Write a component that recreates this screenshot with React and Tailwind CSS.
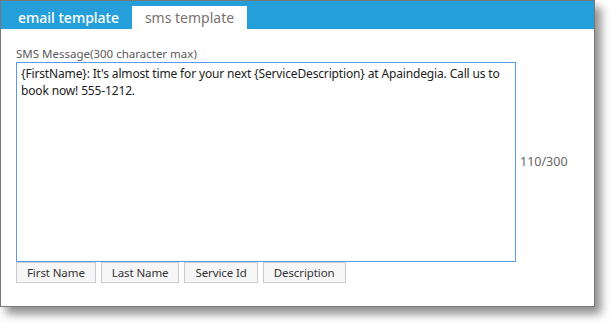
import React from 'react';

export default function App() {
  const message =
    "{FirstName}: It's almost time for your next {ServiceDescription} at Apaindegia. Call us to book now! 555-1212.";
  const tags = ['First Name', 'Last Name', 'Service Id', 'Description'];

  return (
    <div className="w-[611px] h-[323px] bg-white font-['Noto_Sans',sans-serif]">
      <div className="w-[595px] h-[307px] border border-[#787878] bg-white shadow-[6px_7px_9px_rgba(0,0,0,0.45)] flex flex-col">
        {/* tabs */}
        <div className="h-[28px] bg-[#259fd9] flex items-end pl-[4px]">
          <div className="w-[127px] h-[23px] flex items-center justify-center text-white text-[14px] font-medium">
            email template
          </div>
          <div className="w-[115px] h-[23px] flex items-center justify-center bg-white text-[#7a7070] text-[14px]">
            sms template
          </div>
        </div>

        {/* body */}
        <div className="px-[15px] pt-[16px]">
          <div className="text-[11.5px] leading-[17px] text-[#5a5a5a]">SMS Message(300 character max)</div>
          <div className="flex items-center gap-[4px]">
            <textarea
              readOnly
              defaultValue={message}
              className="w-[500px] h-[200px] resize-none border-[1.5px] border-[#5b9bea] px-[4px] py-[2px] text-[12px] tracking-[-0.15px] leading-[17px] text-[#222] outline-none"
            />
            <span className="text-[12.5px] text-[#666]">110/300</span>
          </div>
          <div className="flex gap-[5px]">
            {tags.map((t) => (
              <button
                key={t}
                className="h-[21px] px-[10px] bg-[#f6f6f6] border border-[#cccccc] text-[11.5px] tracking-[-0.1px] text-[#333] leading-none"
              >
                {t}
              </button>
            ))}
          </div>
        </div>
      </div>
    </div>
  );
}
